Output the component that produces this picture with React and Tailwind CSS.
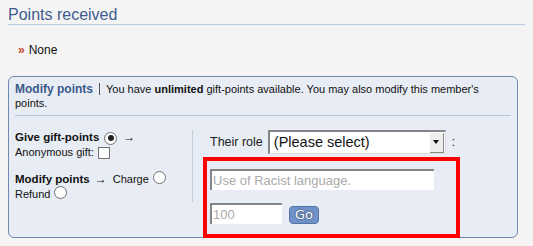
import React from "react";

function Radio({ checked }) {
  return (
    <span className="inline-flex w-[13px] h-[13px] rounded-full border border-[#707070] bg-white items-center justify-center shrink-0">
      {checked && <span className="w-[6px] h-[6px] rounded-full bg-[#222]" />}
    </span>
  );
}

export default function App() {
  return (
    <div className="w-[533px] h-[246px] bg-[#f4f4f4] relative overflow-hidden font-['Liberation_Sans',Arial,sans-serif] text-[#111]">
      <div className="px-[8px] pt-[5px]">
        <div className="text-[16px] leading-[19px] text-[#3f5c8e] border-b border-[#b9cce6]">Points received</div>
        <div className="flex items-center h-[14px] mt-[18px] pl-[10px] text-[12px] leading-[14px]">
          <span className="text-[#c0462a] font-bold text-[12px] mr-[5px] tracking-[-1px]">»</span>
          <span>None</span>
        </div>
        <div className="mt-[19px] w-[510px] h-[162px] rounded-[6px] border border-[#7189b1] bg-[#e8ecf4] px-[6px] pt-[5px]">
          <div className="text-[11px] leading-[14px] pb-[5px] border-b border-[#b6c3d8]">
            <div className="h-[28px]">
              <span className="text-[12px] font-bold text-[#3b5a8c] leading-[14px]">Modify points</span>
              <span className="inline-block w-px h-[12px] bg-[#555] mx-[6px] align-[-2px]" />
              <span>You have <b>unlimited</b> gift-points available. You may also modify this member's points.</span>
            </div>
          </div>
          <div className="flex mt-[14px]">
            <div className="w-[178px] border-r border-[#c4ccda] h-[72px] text-[11px] leading-[15px]">
              <div className="flex items-center h-[15px]">
                <span className="text-[11.5px] font-bold">Give gift-points</span>
                <span className="ml-[5px]"><Radio checked /></span>
                <span className="ml-[6px] text-[12px]">→</span>
              </div>
              <div className="flex items-center h-[15px]">
                <span>Anonymous gift:</span>
                <span className="ml-[4px] inline-block w-[12px] h-[12px] border border-[#707070] bg-white" />
              </div>
              <div className="flex items-center h-[15px] mt-[12px]">
                <span className="text-[11.5px] font-bold">Modify points</span>
                <span className="ml-[5px] text-[12px]">→</span>
                <span className="ml-[6px]">Charge</span>
                <span className="ml-[4px]"><Radio /></span>
              </div>
              <div className="flex items-center h-[15px]">
                <span>Refund</span>
                <span className="ml-[4px]"><Radio /></span>
              </div>
            </div>
            <div className="pl-[17px]">
              <div className="flex items-center h-[24px]">
                <span className="text-[12.5px] text-[#222] mr-[5px]">Their role</span>
                <div className="w-[178px] h-[24px] bg-white border-t-2 border-l-2 border-[#858585] border-r border-b border-r-[#ddd] border-b-[#ddd] flex items-center">
                  <span className="flex-1 pl-[4px] text-[14.5px] text-[#111]">(Please select)</span>
                  <span className="w-[14px] h-[20px] mr-[1px] bg-[#eee] border-r border-b border-[#888] flex items-center justify-center">
                    <span className="w-0 h-0 border-l-[3px] border-r-[3px] border-t-[4px] border-l-transparent border-r-transparent border-t-[#111]" />
                  </span>
                </div>
                <span className="ml-[6px] text-[12px]">:</span>
              </div>
              <div className="mt-[15px] w-[224px] h-[21px] bg-white border-t-2 border-l-2 border-[#858585] flex items-center pl-[1px] text-[13px] text-[#aaa]">
                Use of Racist language.
              </div>
              <div className="flex items-start mt-[13px]">
                <div className="w-[72px] h-[21px] bg-white border-t-2 border-l-2 border-[#858585] flex items-center pl-[1px] text-[13px] text-[#aaa]">
                  100
                </div>
                <div className="ml-[7px] w-[30px] h-[18px] mt-[3px] rounded-[4px] bg-[#6f92c8] border border-[#5575a8] flex items-center justify-center text-white text-[13px] font-['DejaVu_Sans',sans-serif] [text-shadow:0_0_2px_#223]">
                  Go
                </div>
              </div>
            </div>
          </div>
        </div>
      </div>
      <div className="absolute left-[203px] top-[157px] w-[257px] h-[81px] border-[4px] border-[#ff0000]" />
    </div>
  );
}
